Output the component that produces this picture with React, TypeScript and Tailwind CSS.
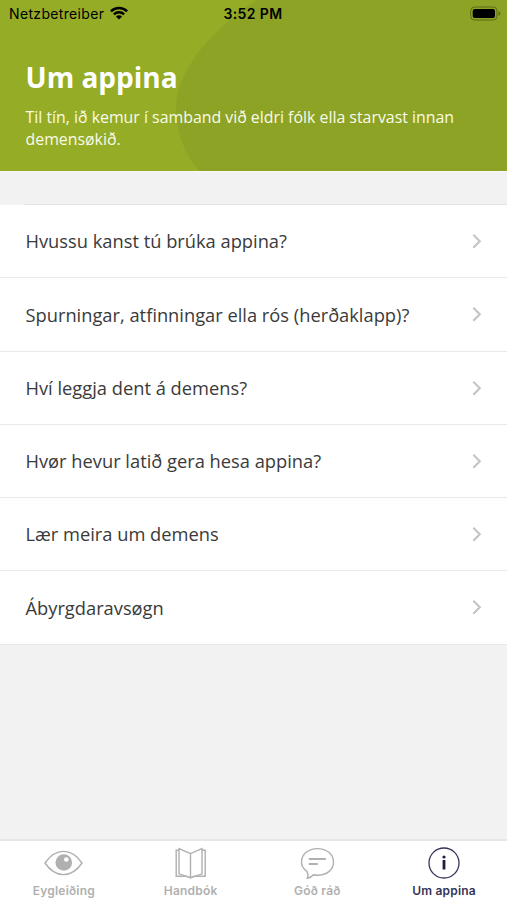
import React from 'react';

interface TabItemProps {
	label: string;
	active?: boolean;
	children: React.ReactNode;
}

const topics = [
	'Hvussu kanst tú brúka appina?',
	'Spurningar, atfinningar ella rós (herðaklapp)?',
	'Hví leggja dent á demens?',
	'Hvør hevur latið gera hesa appina?',
	'Lær meira um demens',
	'Ábyrgdaravsøgn',
];

const StatusBar: React.FC = () => (
	<div className="grid h-7 grid-cols-3 items-center pl-[9px] pr-[6px] font-['Inter',sans-serif] text-[14px] leading-7 text-black">
		<div className="flex items-center gap-[6px]">
			<span className="tracking-[0.34px]">Netzbetreiber</span>
			<svg width="18" height="14" viewBox="0 0 18 14" className="-mt-0.5">
				<g fill="none" stroke="currentColor" strokeWidth="2.5">
					<path d="M0.9 5.3a11.4 11.4 0 0 1 16.2 0" />
					<path d="M3.9 8.4a7.2 7.2 0 0 1 10.2 0" />
				</g>
				<path d="M5.9 10.5a4.4 4.4 0 0 1 6.2 0L9 13.6z" />
			</svg>
		</div>
		<span className="-ml-1 text-center text-[14px] font-semibold tracking-[0.4px]">
			3:52 PM
		</span>
		<svg
			width="31"
			height="15"
			viewBox="0 0 31 15"
			className="-mt-0.5 justify-self-end"
		>
			<rect
				x="0.7"
				y="1"
				width="26.3"
				height="13"
				rx="3.8"
				fill="none"
				stroke="#5b6d15"
			/>
			<rect x="2.7" y="3" width="22.3" height="9" rx="2" />
			<path d="M28.5 5.2c2.4.8 2.4 3.8 0 4.6z" fill="#5b6d15" />
		</svg>
	</div>
);

const Header: React.FC = () => (
	<header className="relative h-[171px] shrink-0 overflow-hidden bg-[#95ac26]">
		{/* Bubble behind the text */}
		<svg
			className="absolute inset-0"
			width="507"
			height="171"
			viewBox="0 0 507 171"
		>
			<path
				d="M257 0C204 33 176 78 176 106c0 25 8 48 23 65h308V0z"
				fill="#8ca325"
			/>
		</svg>
		<div className="relative">
			<StatusBar />
			<div className="px-[25.5px] pt-[29px] text-white">
				<h1 className="text-[28px] font-bold leading-10">Um appina</h1>
				<p className="mt-[10px] text-[15.88px] leading-[21.5px] text-[#fafbe9]">
					Til tín, ið kemur í samband við eldri fólk ella starvast innan
					demensøkið.
				</p>
			</div>
		</div>
	</header>
);

const TabItem: React.FC<TabItemProps> = ({ label, active, children }) => (
	<a
		className={
			active
				? 'flex flex-1 flex-col items-center text-[#343557]'
				: 'flex flex-1 flex-col items-center text-[#b0b0b0]'
		}
	>
		<svg
			width="40"
			height="36"
			viewBox="0 0 40 36"
			fill="none"
			stroke="currentColor"
			strokeWidth="1.4"
			className="mt-1"
		>
			{children}
		</svg>
		<span className="mt-[2px] whitespace-nowrap pl-px font-['Inter',sans-serif] text-[12px] font-semibold leading-4 tracking-[0.2px]">
			{label}
		</span>
	</a>
);

const App: React.FC = () => {
	return (
		<div className="flex h-[900px] w-[507px] flex-col bg-[#f2f2f2] font-['Open_Sans','Noto_Sans',sans-serif]">
			<Header />
			{/* Gap above the list, the hairline starts at the text inset */}
			<div className="h-[34px] shrink-0 border-t border-[#f9faf5] pl-[25px]">
				<div className="h-full border-b border-[#e4e4e4]" />
			</div>

			<ul className="shrink-0 bg-white">
				{topics.map((topic) => (
					<li
						key={topic}
						className="flex h-[73.25px] items-center justify-between border-b border-[#e9e9e9] pl-[25.5px] pr-[24px] text-[18.3px] text-[#3a3a3a]"
					>
						<span className="whitespace-nowrap">{topic}</span>
						<svg
							width="11"
							height="16"
							viewBox="0 0 11 16"
							fill="none"
							stroke="#c4c4c4"
							strokeWidth="2.1"
						>
							<path d="M1.3 1.8 7.8 8.3l-6.5 6.5" />
						</svg>
					</li>
				))}
			</ul>

			<nav className="mt-auto flex h-[61px] border-t-2 border-[#e6e6e6] bg-white">
				<TabItem label="Eygleiðing">
					<path d="M2 18C12.5 2.5 28.5 2.5 39 18 28.5 33.5 12.5 33.5 2 18z" />
					<circle
						cx="20.8"
						cy="17.5"
						r="8.3"
						fill="currentColor"
						stroke="none"
					/>
					<circle cx="23.3" cy="14.5" r="2.3" fill="#fff" stroke="none" />
				</TabItem>
				<TabItem label="Handbók">
					<path d="M20.5 8.6 9 3.6v25.2l11.5 4 11.5-4V3.6zM20.5 8.6v24" />
					<path d="M9 5.2H6.2v26h10.5l3.8 1.6 3.8-1.6h10.9v-26H32" />
				</TabItem>
				<TabItem label="Góð ráð">
					<path d="M9.8 26.2C6.3 23.8 4.5 20.8 4.5 17c0-8 7-13.4 16-13.4s16 5.4 16 13.4-7 13.2-16 13.2c-1.8 0-2.8-.2-4-.5-1.5 1.8-4 3.2-6.2 3.6.8-2 1-4.6-.5-7.1z" />
					<path d="M11.8 14h17M11.8 19h9" strokeWidth="2" />
				</TabItem>
				<TabItem label="Um appina" active>
					<circle cx="20" cy="18" r="15" strokeWidth="1.3" />
					<circle
						cx="20"
						cy="12"
						r="1.6"
						fill="#1d1e42"
						stroke="none"
					/>
					<path d="M20 15v9.5" stroke="#1d1e42" strokeWidth="2.8" />
				</TabItem>
			</nav>
		</div>
	);
};

export default App;
